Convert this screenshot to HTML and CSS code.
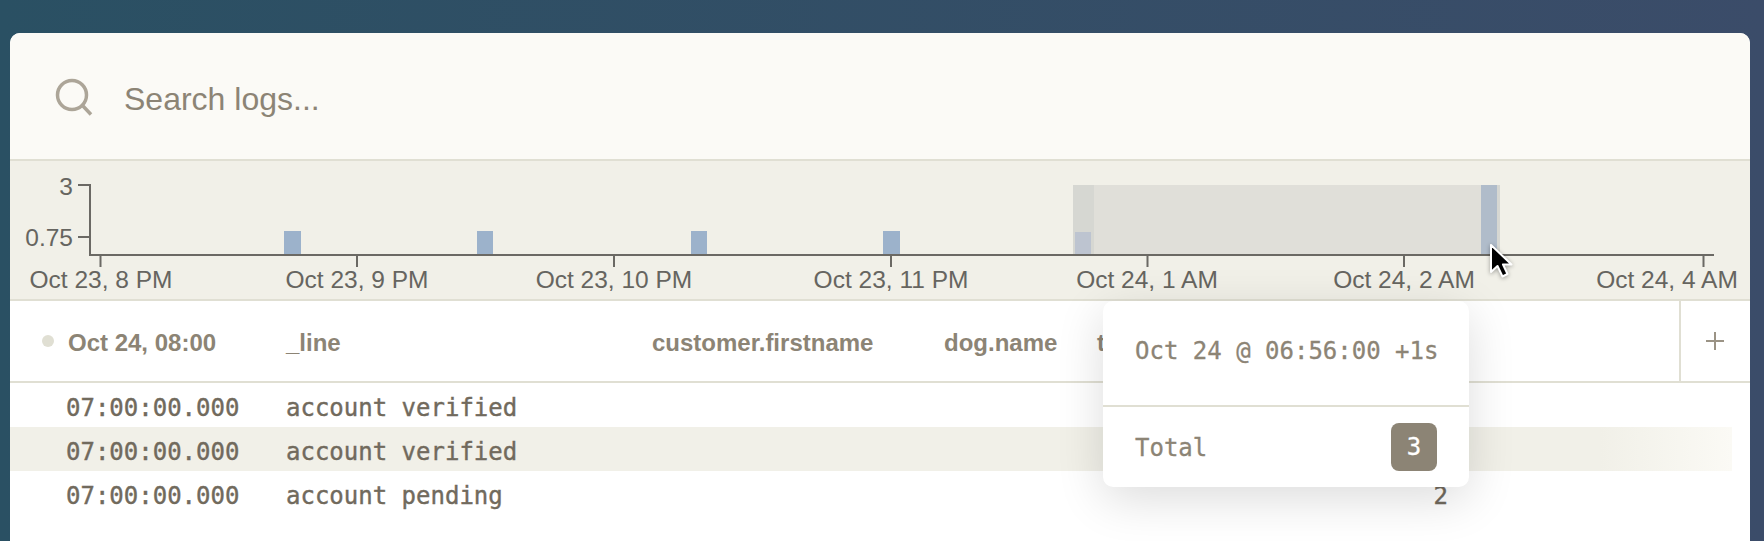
FILE: index.html
```html
<!DOCTYPE html>
<html lang="en">
<head>
<meta charset="utf-8">
<title>Logs</title>
<link rel="stylesheet" href="styles.css">
</head>
<body>
<main class="page">
  <section class="card">
    <div class="search">
      <svg class="search-icon" width="40" height="40" viewBox="0 0 40 40" aria-hidden="true">
        <circle cx="17" cy="17" r="14.500"></circle>
        <line x1="27.500" y1="27.500" x2="36" y2="36.500"></line>
      </svg>
      <span class="placeholder">Search logs...</span>
    </div>
    <div class="chart">
      <svg class="chart-svg" width="1740" height="139" viewBox="10 161 1740 139">
        <rect class="sel" x="1073" y="185" width="427" height="70"></rect>
        <rect class="sel-col" x="1073" y="185" width="21" height="70"></rect>
        <rect class="sel-col" x="1481" y="185" width="19" height="70"></rect>
        <rect class="bar" x="284" y="231" width="17" height="24"></rect>
        <rect class="bar" x="477" y="231" width="16" height="24"></rect>
        <rect class="bar" x="691" y="231" width="16" height="24"></rect>
        <rect class="bar" x="883" y="231" width="17" height="24"></rect>
        <rect class="bar-dim" x="1075" y="232" width="16" height="23"></rect>
        <rect class="bar-dim-full" x="1481" y="185" width="16" height="70"></rect>
        <path class="axis" d="M78 185H90V255H1714M78 237H90M100.500 255V267M357 255V267M614 255V267M891 255V267M1147.500 255V267M1404 255V267M1703.500 255V267"></path>
        <text class="lbl end" x="73" y="195">3</text>
        <text class="lbl end" x="73" y="246">0.75</text>
        <text class="lbl mid" x="101" y="288">Oct 23, 8 PM</text>
        <text class="lbl mid" x="357" y="288">Oct 23, 9 PM</text>
        <text class="lbl mid" x="614" y="288">Oct 23, 10 PM</text>
        <text class="lbl mid" x="891" y="288">Oct 23, 11 PM</text>
        <text class="lbl mid" x="1147" y="288">Oct 24, 1 AM</text>
        <text class="lbl mid" x="1404" y="288">Oct 24, 2 AM</text>
        <text class="lbl mid" x="1667" y="288">Oct 24, 4 AM</text>
      </svg>
    </div>
    <div class="thead">
      <div class="th th-first"><span class="dot"></span>Oct 24, 08:00</div>
      <div class="th">_line</div>
      <div class="th">customer.firstname</div>
      <div class="th">dog.name</div>
      <div class="th">t</div>
      <div class="th-add"><span class="plus"></span></div>
    </div>
    <div class="rows">
      <div class="row"><span class="time">07:00:00.000</span><span>account verified</span></div>
      <div class="row row-hl"><span class="time">07:00:00.000</span><span>account verified</span></div>
      <div class="row"><span class="time">07:00:00.000</span><span>account pending</span><span class="num">2</span></div>
    </div>
    <aside class="tooltip">
      <div class="tip-head">Oct 24 @ 06:56:00 +1s</div>
      <div class="tip-foot"><span class="tip-label">Total</span><span class="badge">3</span></div>
    </aside>
    <svg class="cursor" width="30" height="40" viewBox="-3 -3 30 40" aria-hidden="true">
      <path d="M0 0V27L6.500 21L11.500 31.500L16.500 29L12 19.500H20.500Z"></path>
    </svg>
  </section>
</main>
</body>
</html>
```
FILE: styles.css
```css
* { box-sizing: border-box; }
html, body { margin: 0; height: 100%; }
body { overflow: hidden; }

.page {
  height: 541px;
  padding: 33px 14px 0 10px;
  overflow: hidden;
  background: linear-gradient(90deg, #2a5063 0%, #3b4c69 100%);
}

.card {
  position: relative;
  height: 540px;
  background: #fff;
  border-radius: 10px 10px 0 0;
  overflow: hidden;
  font-family: "Liberation Sans", Arial, sans-serif;
}

.search {
  display: flex;
  align-items: center;
  gap: 29px;
  height: 128px;
  padding: 0 0 0 45px;
  background: #fbfaf6;
  border-bottom: 2px solid #e0dfd3;
}
.search-icon { flex: none; margin-top: 4px; }
.search-icon circle, .search-icon line { fill: none; stroke: #aca598; stroke-width: 3.5; }
.placeholder { font-size: 32px; color: #8c8475; margin-top: 6px; }

.chart {
  height: 140px;
  background: #f1f0e8;
  border-bottom: 2px solid #e0dfd3;
}
.chart-svg { display: block; }
.sel { fill: #e0dfd9; }
.sel-col { fill: #d6d7d2; }
.bar { fill: #9cb2cb; }
.bar-dim { fill: #bdc4d0; }
.bar-dim-full { fill: #b0bcca; }
.axis { fill: none; stroke: #6b6964; stroke-width: 2; }
.lbl { font-size: 24.5px; fill: #666560; font-family: "Liberation Sans", Arial, sans-serif; }
.end { text-anchor: end; }
.mid { text-anchor: middle; }

.thead {
  display: grid;
  grid-template-columns: 276px 366px 292px 153px 1fr 71px;
  height: 82px;
  border-bottom: 2px solid #e0dfd3;
  background: #fff;
}
.th {
  display: flex;
  align-items: center;
  padding-top: 4px;
  font-size: 24px;
  font-weight: 700;
  color: #8c8475;
}
.th-first { padding-left: 32px; }
.dot {
  width: 12px;
  height: 12px;
  border-radius: 50%;
  background: #e0dfd3;
  margin-right: 14px;
  margin-bottom: 4px;
}
.th-add {
  display: flex;
  align-items: center;
  justify-content: center;
  border-left: 2px solid #e0dfd3;
  padding-right: 2px;
}
.plus {
  width: 18px;
  height: 18px;
  background:
    linear-gradient(#9b9385, #9b9385) center / 100% 2px no-repeat,
    linear-gradient(#9b9385, #9b9385) center / 2px 100% no-repeat;
}

.row {
  display: grid;
  grid-template-columns: 276px 1fr auto;
  align-items: center;
  height: 44px;
  padding: 5px 302px 0 0;
  font-family: "DejaVu Sans Mono", "Liberation Mono", monospace;
  font-size: 24px;
  color: #716a5d;
  -webkit-text-stroke: 0.4px #716a5d;
}
.row-hl {
  margin-right: 18px;
  background: linear-gradient(90deg, #f1f0e8 0, #f1f0e8 1590px, #fbfaf5 100%);
}
.time { padding-left: 56px; }

.tooltip {
  position: absolute;
  left: 1093px;
  top: 268px;
  width: 366px;
  height: 186px;
  background: #fff;
  border-radius: 10px;
  box-shadow: 0 12px 48px rgba(0, 0, 0, .14);
  font-family: "DejaVu Sans Mono", "Liberation Mono", monospace;
  font-size: 24px;
  color: #8c8475;
  -webkit-text-stroke: 0.3px #8c8475;
}
.tip-head {
  height: 106px;
  padding: 32px 0 0 32px;
  line-height: 36px;
  white-space: nowrap;
  border-bottom: 2px solid #e0dfd3;
}
.tip-foot {
  display: flex;
  align-items: center;
  justify-content: space-between;
  height: 80px;
  padding: 0 32px;
}
.tip-label { padding-top: 2px; }
.badge {
  display: flex;
  align-items: center;
  justify-content: center;
  width: 46px;
  height: 48px;
  border-radius: 8px;
  background: #8c8475;
  color: #fff;
  -webkit-text-stroke: 0.3px #fff;
}

.cursor {
  position: absolute;
  left: 1478px;
  top: 209px;
  filter: drop-shadow(0 1px 2px rgba(0, 0, 0, .35));
}
.cursor path { fill: #000; stroke: #fff; stroke-width: 2; stroke-linejoin: round; }
```
